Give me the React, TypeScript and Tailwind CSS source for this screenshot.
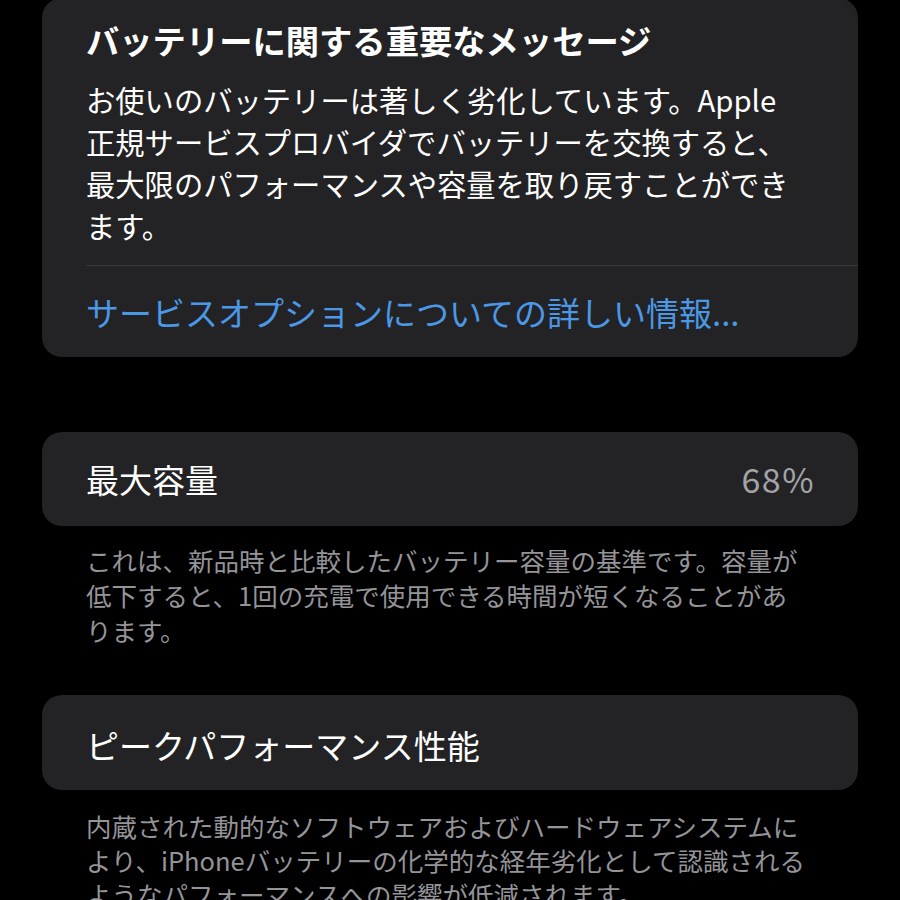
import React from "react";

const font = { fontFamily: '"Noto Sans CJK JP", "Noto Sans", sans-serif' };

export default function App() {
  return (
    <div
      className="w-[900px] h-[900px] overflow-hidden bg-black px-[42px] font-['Noto_Sans_CJK_JP',sans-serif]"
      style={font}
    >
      {/* Important message card */}
      <div className="-mt-[2px] rounded-[20px] bg-[#232325] pl-[44px] pt-[22px] pb-[24px]">
        <div className="text-[33.3px] leading-[40px] font-bold text-white whitespace-nowrap">
          バッテリーに関する重要なメッセージ
        </div>
        <div className="mt-[18px] text-[29.3px] leading-[42px] text-white whitespace-nowrap">
          <div>お使いのバッテリーは著しく劣化しています。Apple</div>
          <div>正規サービスプロバイダでバッテリーを交換すると、</div>
          <div>最大限のパフォーマンスや容量を取り戻すことができ</div>
          <div>ます。</div>
        </div>
        <div className="mt-[19px] h-px bg-[#3a3a3c]" />
        <div className="mt-[25px] text-[33px] leading-[42px] text-[#4a98e6] whitespace-nowrap">
          サービスオプションについての詳しい情報...
        </div>
      </div>

      {/* Maximum capacity */}
      <div className="mt-[75px] flex h-[94px] items-center justify-between rounded-[20px] bg-[#232325] pl-[44px] pr-[43px]">
        <span className="text-[33px] leading-[40px] text-white">最大容量</span>
        <span className="text-[34px] leading-[40px] tracking-[1.5px] text-[#a3a3a8]">68%</span>
      </div>
      <div className="mt-[16px] pl-[44px] text-[25.5px] leading-[35px] text-[#949499] whitespace-nowrap">
        <div>これは、新品時と比較したバッテリー容量の基準です。容量が</div>
        <div>低下すると、1回の充電で使用できる時間が短くなることがあ</div>
        <div>ります。</div>
      </div>

      {/* Peak performance */}
      <div className="mt-[48px] flex h-[95px] items-center rounded-[20px] bg-[#232325] pl-[44px] pt-[4px]">
        <span className="text-[33px] leading-[40px] text-white">ピークパフォーマンス性能</span>
      </div>
      <div className="mt-[19px] pl-[44px] text-[25.5px] leading-[34px] text-[#949499] whitespace-nowrap">
        <div>内蔵された動的なソフトウェアおよびハードウェアシステムに</div>
        <div>より、iPhoneバッテリーの化学的な経年劣化として認識される</div>
        <div>ようなパフォーマンスへの影響が低減されます。</div>
      </div>
    </div>
  );
}
